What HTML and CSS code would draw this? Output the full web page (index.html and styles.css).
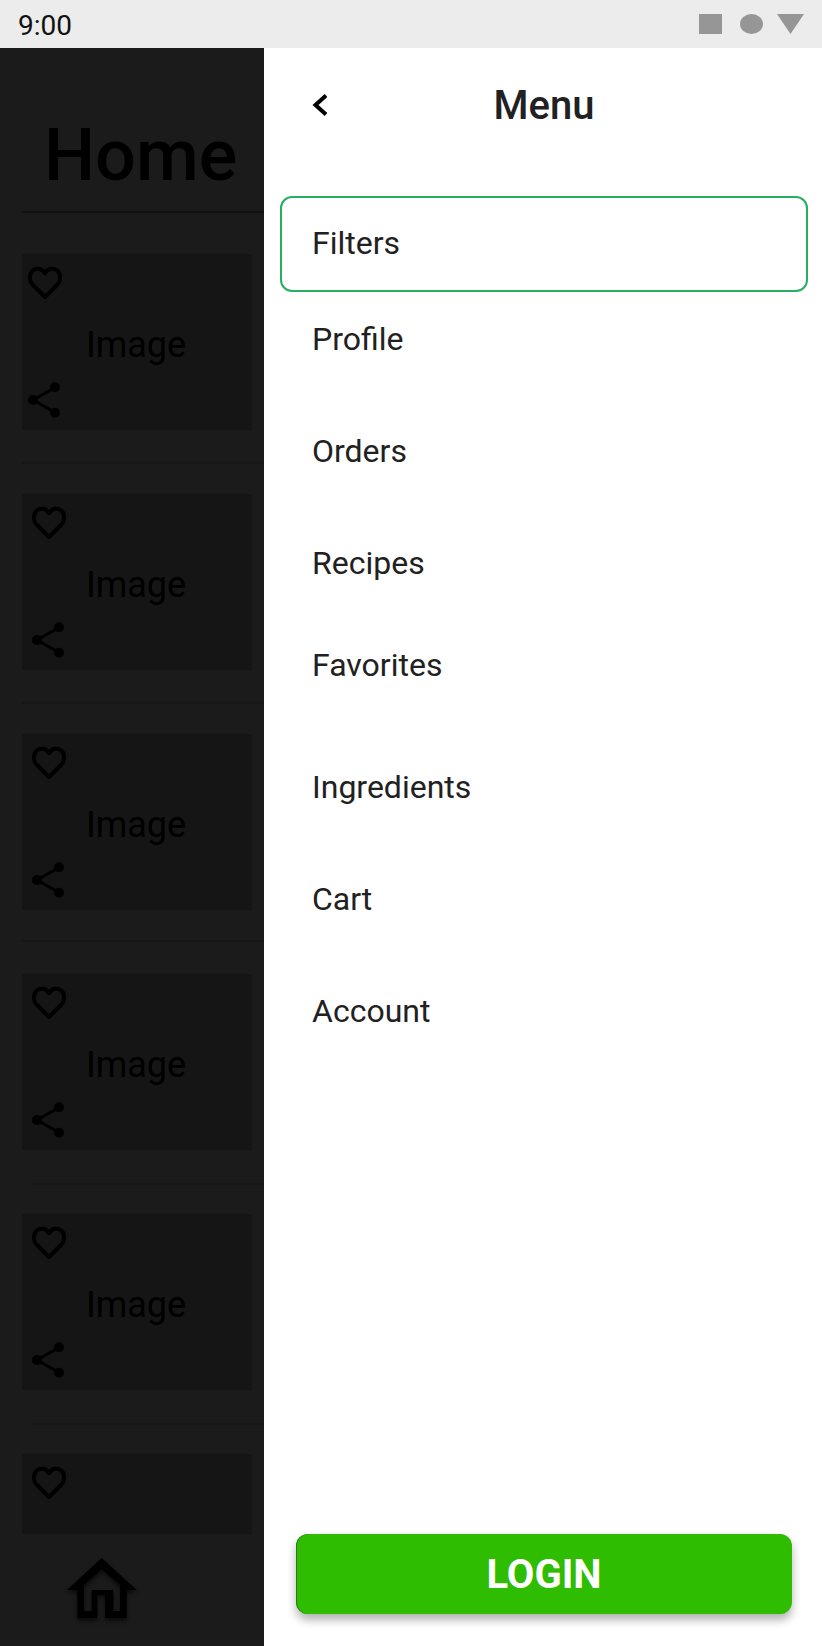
FILE: index.html
```html
<!DOCTYPE html>
<html>
<head>
  <meta charset="UTF-8">
  <title>Menu</title>
  <link rel="stylesheet" href="styles.css">
</head>
<body>
  <svg class="sprite">
    <symbol id="heart" viewBox="0 0 34 34">
      <path d="M17 31 4.5 18.5C.8 14.2 1 8 4.8 4.6 8.8 1.2 14 2.4 17 7.2 20 2.4 25.2 1.2 29.2 4.6 33 8 33.2 14.2 29.5 18.5Z"/>
    </symbol>
    <symbol id="share" viewBox="0 0 32 36">
      <path d="M27 5.5 5 18 27 30.5" fill="none" stroke="#000" stroke-width="3"/>
      <circle cx="5" cy="18" r="5"/>
      <circle cx="27" cy="5.2" r="5"/>
      <circle cx="27" cy="30.8" r="5"/>
    </symbol>
  </svg>

  <div class="status-bar">
    <span class="time">9:00</span>
    <div class="status-icons">
      <span class="status-square"></span>
      <span class="status-circle"></span>
      <svg class="status-triangle" width="27" height="20" viewBox="0 0 27 20"><polygon points="0,0 27,0 13.5,20"/></svg>
    </div>
  </div>

  <div class="screen">
    <div class="home">
      <h1>Home</h1>
      <div class="home-list">
        <div class="card first">
          <svg class="heart"><use href="#heart"/></svg>
          <span class="card-label">Image</span>
          <svg class="share"><use href="#share"/></svg>
        </div>
        <div class="divider"></div>
        <div class="card">
          <svg class="heart"><use href="#heart"/></svg>
          <span class="card-label">Image</span>
          <svg class="share"><use href="#share"/></svg>
        </div>
        <div class="divider"></div>
        <div class="card">
          <svg class="heart"><use href="#heart"/></svg>
          <span class="card-label">Image</span>
          <svg class="share"><use href="#share"/></svg>
        </div>
        <div class="divider high"></div>
        <div class="card">
          <svg class="heart"><use href="#heart"/></svg>
          <span class="card-label">Image</span>
          <svg class="share"><use href="#share"/></svg>
        </div>
        <div class="divider inset"></div>
        <div class="card">
          <svg class="heart"><use href="#heart"/></svg>
          <span class="card-label">Image</span>
          <svg class="share"><use href="#share"/></svg>
        </div>
        <div class="divider inset"></div>
        <div class="card last">
          <svg class="heart"><use href="#heart"/></svg>
        </div>
      </div>
      <div class="home-nav">
        <svg class="home-icon" width="85" height="75" viewBox="0 0 85 75"><path fill-rule="evenodd" d="M41.7 8 76.7 40H66.7V68H45V45H37.3V68H17.3V40H7ZM41.7 19 24 35V61H31.7V40H53.3V61H60V35Z"/></svg>
      </div>
    </div>

    <div class="drawer">
      <div class="drawer-head">
        <svg class="back" width="16" height="24" viewBox="0 0 16 24"><path d="M14 2.5 3.5 12 14 21.5"/></svg>
        <span class="drawer-title">Menu</span>
      </div>
      <ul class="menu">
        <li class="menu-item selected">Filters</li>
        <li class="menu-item profile">Profile</li>
        <li class="menu-item">Orders</li>
        <li class="menu-item">Recipes</li>
        <li class="menu-item favorites">Favorites</li>
        <li class="menu-item">Ingredients</li>
        <li class="menu-item">Cart</li>
        <li class="menu-item">Account</li>
      </ul>
      <button class="login">LOGIN</button>
    </div>
  </div>
</body>
</html>
```

FILE: styles.css
```css
html, body {
  margin: 0;
  padding: 0;
}
body {
  width: 822px;
  height: 1646px;
  overflow: hidden;
  display: flex;
  flex-direction: column;
  font-family: Roboto, sans-serif;
  background: #fff;
}
.sprite {
  display: none;
}

.status-bar {
  height: 48px;
  flex: none;
  display: flex;
  align-items: center;
  justify-content: space-between;
  padding: 0 18px;
  box-sizing: border-box;
  background: #ececec;
}
.time {
  padding-top: 3px;
  font-size: 28px;
  color: #111;
}
.status-icons {
  display: flex;
  align-items: center;
}
.status-square {
  width: 23px;
  height: 20px;
  margin-right: 18px;
  background: #969696;
}
.status-circle {
  width: 23px;
  height: 20px;
  margin-right: 14px;
  border-radius: 50%;
  background: #969696;
}
.status-triangle {
  fill: #969696;
}

.screen {
  flex: 1;
  display: flex;
  min-height: 0;
}

/* dimmed page behind the drawer */
.home {
  width: 264px;
  flex: none;
  display: flex;
  flex-direction: column;
  overflow: hidden;
  background: #1b1b1b;
}
h1 {
  margin: 0 0 0 22px;
  height: 165px;
  box-sizing: border-box;
  padding: 59px 0 0 22px;
  font-size: 72px;
  font-weight: 500;
  line-height: 98px;
  color: #000;
  white-space: nowrap;
  border-bottom: 2px solid #111;
}
.home-list {
  flex: 1;
  min-height: 0;
  padding-top: 41px;
}
.card {
  height: 176px;
  width: 230px;
  margin-left: 22px;
  box-sizing: border-box;
  padding: 12px 6px;
  background: #151515;
  display: grid;
  grid-template-rows: 1fr auto 1fr;
}
.card .heart,
.card .share {
  margin-left: 4px;
}
.card.first .heart,
.card.first .share {
  margin-left: 0;
}
.card.last {
  height: 80px;
}
.heart {
  width: 34px;
  height: 34px;
  fill: none;
  stroke: #000;
  stroke-width: 4;
  stroke-linejoin: round;
}
.share {
  width: 32px;
  height: 36px;
  align-self: end;
  fill: #000;
}
.card-label {
  justify-self: center;
  margin: 5px 2px 0 0;
  font-size: 36px;
  line-height: 42px;
  color: #000;
}
.divider {
  height: 2px;
  margin: 32px 0 30px 22px;
  background: #161616;
}
.divider.high {
  margin: 30px 0 32px 22px;
}
.divider.inset {
  margin: 33px 0 29px 32px;
}
.home-nav {
  height: 112px;
  flex: none;
  box-sizing: border-box;
  padding: 16px 0 0 60px;
}
.home-icon {
  display: block;
  fill: #000;
  filter: drop-shadow(0 3px 2px rgba(0, 0, 0, 0.6));
}

.drawer {
  flex: 1;
  display: flex;
  flex-direction: column;
  background: #fff;
}
.drawer-head {
  height: 108px;
  flex: none;
  box-sizing: border-box;
  padding-top: 6px;
  display: grid;
  grid-template-columns: 1fr auto 1fr;
  align-items: center;
}
.back {
  margin-left: 48px;
  fill: none;
  stroke: #000;
  stroke-width: 4;
}
.drawer-title {
  margin-left: 2px;
  font-size: 40px;
  font-weight: 500;
  color: #212121;
}
.menu {
  flex: 1;
  list-style: none;
  margin: 40px 14px 0 16px;
  padding: 0;
}
.menu-item {
  height: 112px;
  display: flex;
  align-items: center;
  padding-left: 32px;
  font-size: 32px;
  color: #212121;
}
.menu-item.selected {
  height: 96px;
  box-sizing: border-box;
  padding: 0 0 2px 30px;
  border: 2px solid #27ae60;
  border-radius: 12px;
}
.menu-item.profile {
  height: 95px;
  box-sizing: border-box;
  padding-bottom: 2px;
  margin-bottom: 8px;
}
.menu-item.favorites {
  height: 92px;
  margin-bottom: 20px;
}
.login {
  flex: none;
  margin: 0 30px 32px 32px;
  height: 80px;
  border: none;
  border-radius: 12px;
  background: #2ebd00;
  color: #fff;
  font-family: Roboto, sans-serif;
  font-size: 40px;
  font-weight: 700;
  box-shadow: inset 1px 0 0 #2a7a0a, 0 6px 10px rgba(0, 0, 0, 0.3);
}
```
